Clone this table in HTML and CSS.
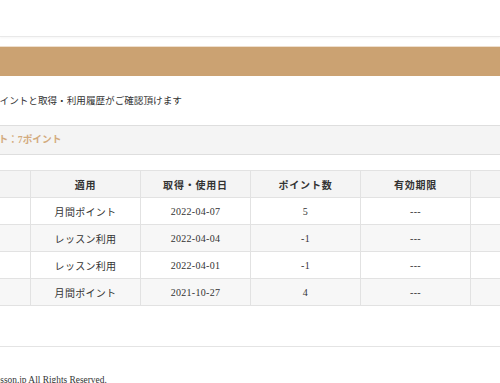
FILE: index.html
```html
<!DOCTYPE html>
<html lang="ja">
<head>
    <meta charset="UTF-8">
    <meta name="viewport" content="width=device-width, initial-scale=1.0">
    <title>ポイント履歴</title>
    <link rel="stylesheet" href="styles.css">
</head>
<body>

<div class="header"></div>

<div class="title-bar"></div>

<div class="page">
    <p class="lead">現在の保有ポイントと取得・利用履歴がご確認頂けます</p>

    <div class="summary">保有ポイント：7ポイント</div>

    <table class="history">
        <thead>
            <tr>
                <th class="col-no">No.</th>
                <th>適用</th>
                <th>取得・使用日</th>
                <th>ポイント数</th>
                <th>有効期限</th>
                <th>備考</th>
            </tr>
        </thead>
        <tbody>
            <tr>
                <td class="col-no">1</td>
                <td>月間ポイント</td>
                <td>2022-04-07</td>
                <td>5</td>
                <td>---</td>
                <td></td>
            </tr>
            <tr>
                <td class="col-no">2</td>
                <td>レッスン利用</td>
                <td>2022-04-04</td>
                <td>-1</td>
                <td>---</td>
                <td></td>
            </tr>
            <tr>
                <td class="col-no">3</td>
                <td>レッスン利用</td>
                <td>2022-04-01</td>
                <td>-1</td>
                <td>---</td>
                <td></td>
            </tr>
            <tr>
                <td class="col-no">4</td>
                <td>月間ポイント</td>
                <td>2021-10-27</td>
                <td>4</td>
                <td>---</td>
                <td></td>
            </tr>
        </tbody>
    </table>
</div>

<div class="footer">
    <p>© lesson.jp All Rights Reserved.</p>
</div>

</body>
</html>
```

FILE: styles.css
```css
html, body {
    overflow: hidden;
}

body {
    margin: 0;
    padding: 0;
    background-color: #fff;
    color: #333;
    font-family: "Liberation Serif", "Noto Sans CJK JP", serif;
    font-size: 10px;
}

.header {
    height: 36px;
    border-bottom: 1px solid #e9e9e9;
    box-shadow: 0 1px 2px rgba(0, 0, 0, 0.04);
}

.title-bar {
    margin-top: 9px;
    height: 29px;
    border-top: 1px solid #eedfce;
    background-color: #cba272;
}

.page {
    margin-left: -60px;
    width: 800px;
}

.lead {
    margin: 17px 0 16px 2px;
    line-height: 16px;
    font-size: 9.6px;
}

.summary {
    height: 28px;
    line-height: 28px;
    padding-left: 10px;
    background-color: #f4f4f4;
    border-top: 1px solid #dedede;
    border-bottom: 1px solid #dedede;
    color: #d3ab7e;
    font-weight: bold;
    font-size: 9.7px;
}

.history {
    margin-top: 15px;
    border-collapse: collapse;
    table-layout: fixed;
    width: 640px;
}

.history th,
.history td {
    width: 109px;
    height: 26px;
    padding: 0;
    border: 1px solid #e2e2e2;
    text-align: center;
    letter-spacing: 0.3px;
}

.history .col-no {
    width: 89px;
}

.history th {
    background-color: #f4f4f4;
    font-weight: bold;
    letter-spacing: 0.8px;
}

.history tbody tr:nth-child(even) td {
    background-color: #f7f7f7;
}

.footer {
    margin-top: 40px;
    border-top: 1px solid #e4e4e4;
}

.footer p {
    margin: 0 0 0 -16px;
    padding-top: 26px;
    line-height: 14px;
    font-size: 9.4px;
    color: #333;
}
```
